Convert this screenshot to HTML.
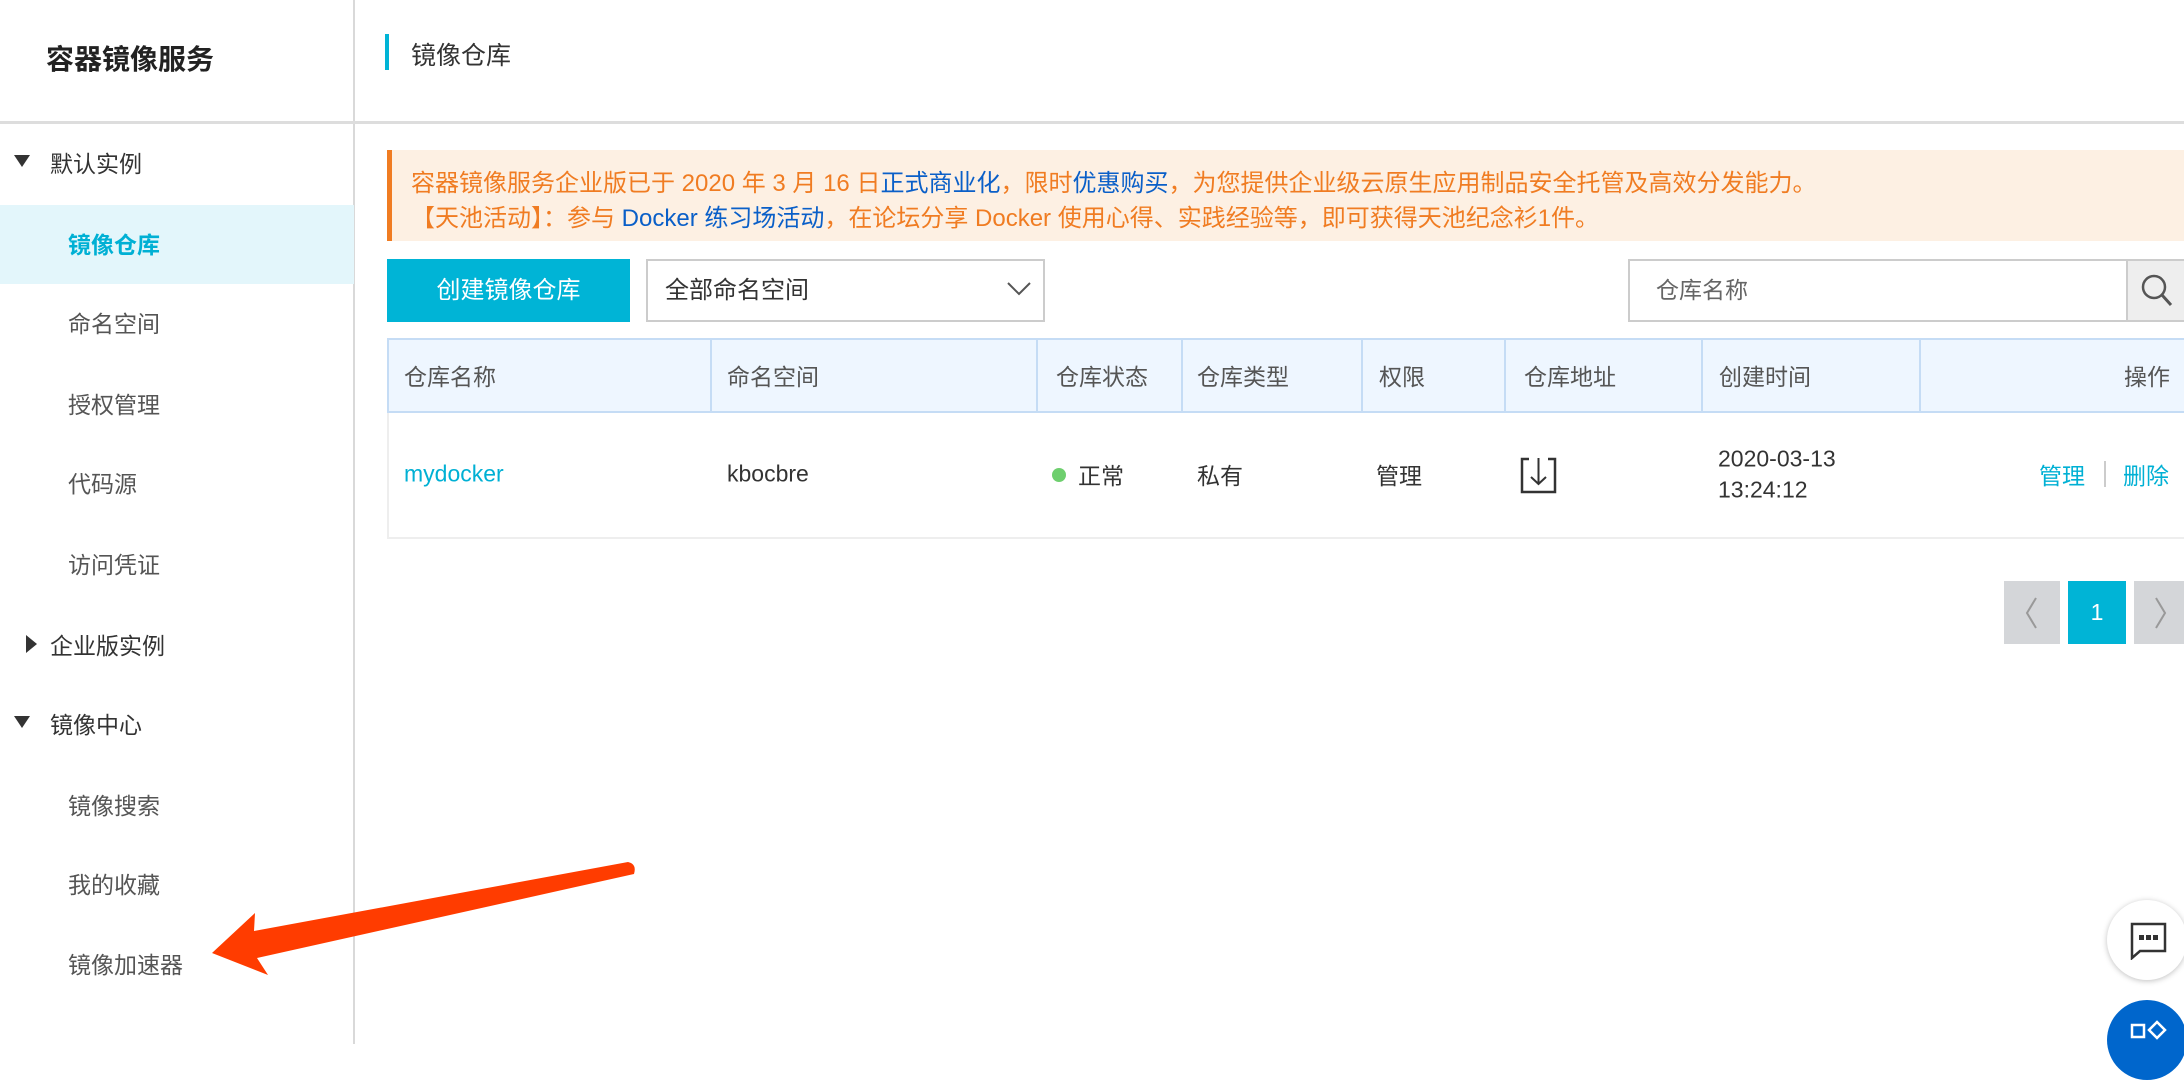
<!DOCTYPE html>
<html><head><meta charset="utf-8"><style>
*{margin:0;padding:0;box-sizing:border-box}
body{width:2184px;height:1044px;overflow:hidden;background:#fff;font-family:"Liberation Sans","Noto Sans CJK SC",sans-serif;color:#333;position:relative}
.a{position:absolute;white-space:nowrap}
.side{position:absolute;left:0;top:0;width:355px;height:1044px;border-right:2px solid #d9d9d9}
.nav{position:absolute;font-size:23px;color:#555;transform:translateY(-50%)}
.grp{color:#333}
.cell{position:absolute;transform:translateY(-50%);font-size:23px;white-space:nowrap}
</style></head><body>
<div class="side"></div>
<div class="a" style="left:0;top:121px;width:2184px;height:3px;background:#ddd"></div>
<div class="a" style="left:46px;top:38px;font-size:28px;font-weight:bold;color:#222">容器镜像服务</div>
<div class="a" style="left:385px;top:34px;width:4px;height:36px;background:#00b4d6"></div>
<div class="a" style="left:411px;top:36px;font-size:25px;color:#333">镜像仓库</div>

<div class="a" style="left:0;top:205px;width:354px;height:79px;background:#e3f6fb"></div>
<svg class="a" style="left:14px;top:155px" width="16" height="14"><path d="M0 0H16L8 12Z" fill="#333"/></svg>
<div class="nav grp" style="left:50px;top:162px">默认实例</div>
<div class="nav" style="left:68px;top:243px;color:#00b0d4;font-weight:bold">镜像仓库</div>
<div class="nav" style="left:68px;top:322px">命名空间</div>
<div class="nav" style="left:68px;top:403px">授权管理</div>
<div class="nav" style="left:68px;top:482px">代码源</div>
<div class="nav" style="left:68px;top:563px">访问凭证</div>
<svg class="a" style="left:26px;top:635px" width="12" height="18"><path d="M0 0L11 9L0 18Z" fill="#333"/></svg>
<div class="nav grp" style="left:50px;top:644px">企业版实例</div>
<svg class="a" style="left:14px;top:716px" width="16" height="14"><path d="M0 0H16L8 12Z" fill="#333"/></svg>
<div class="nav grp" style="left:50px;top:723px">镜像中心</div>
<div class="nav" style="left:68px;top:804px">镜像搜索</div>
<div class="nav" style="left:68px;top:883px">我的收藏</div>
<div class="nav" style="left:68px;top:963px">镜像加速器</div>

<div class="a" style="left:387px;top:150px;width:1797px;height:91px;background:#fdf0e3;border-left:5px solid #f07c22"></div>
<div class="a" style="left:411px;top:163px;font-size:24px;color:#f07c22">容器镜像服务企业版已于 2020 年 3 月 16 日<span style="color:#0a5fc8">正式商业化</span>，限时<span style="color:#0a5fc8">优惠购买</span>，为您提供企业级云原生应用制品安全托管及高效分发能力。</div>
<div class="a" style="left:411px;top:198px;font-size:24px;color:#f07c22">【天池活动】：参与 <span style="color:#0a5fc8">Docker 练习场活动</span>，在论坛分享 Docker 使用心得、实践经验等，即可获得天池纪念衫1件。</div>

<div class="a" style="left:387px;top:259px;width:243px;height:63px;background:#00b4d6;color:#fff;font-size:24px;line-height:63px;text-align:center">创建镜像仓库</div>
<div class="a" style="left:646px;top:259px;width:399px;height:63px;border:2px solid #ccc;font-size:24px;line-height:59px;padding-left:17px;color:#333">全部命名空间</div>
<svg class="a" style="left:1007px;top:282px" width="24" height="14"><path d="M1 1L12 12L23 1" stroke="#555" stroke-width="2" fill="none"/></svg>
<div class="a" style="left:1628px;top:259px;width:556px;height:63px;border:2px solid #ccc;font-size:23px;line-height:59px;padding-left:26px;color:#666">仓库名称</div>
<div class="a" style="left:2126px;top:261px;width:58px;height:59px;background:#eee;border-left:2px solid #ccc"></div>
<svg class="a" style="left:2140px;top:273px" width="34" height="36"><circle cx="14" cy="14" r="11" stroke="#555" stroke-width="2.5" fill="none"/><path d="M22 22L31 32" stroke="#555" stroke-width="3"/></svg>

<div class="a" style="left:387px;top:338px;width:1797px;height:75px;background:#eef6ff;border:2px solid #c5dcf5;border-right:none"></div>
<div class="a" style="left:710px;top:340px;width:2px;height:71px;background:#c5dcf5"></div>
<div class="a" style="left:1036px;top:340px;width:2px;height:71px;background:#c5dcf5"></div>
<div class="a" style="left:1181px;top:340px;width:2px;height:71px;background:#c5dcf5"></div>
<div class="a" style="left:1361px;top:340px;width:2px;height:71px;background:#c5dcf5"></div>
<div class="a" style="left:1504px;top:340px;width:2px;height:71px;background:#c5dcf5"></div>
<div class="a" style="left:1701px;top:340px;width:2px;height:71px;background:#c5dcf5"></div>
<div class="a" style="left:1919px;top:340px;width:2px;height:71px;background:#c5dcf5"></div>
<div class="cell" style="left:404px;top:375px;color:#555">仓库名称</div>
<div class="cell" style="left:727px;top:375px;color:#555">命名空间</div>
<div class="cell" style="left:1056px;top:375px;color:#555">仓库状态</div>
<div class="cell" style="left:1197px;top:375px;color:#555">仓库类型</div>
<div class="cell" style="left:1379px;top:375px;color:#555">权限</div>
<div class="cell" style="left:1524px;top:375px;color:#555">仓库地址</div>
<div class="cell" style="left:1719px;top:375px;color:#555">创建时间</div>
<div class="cell" style="right:14px;top:375px;color:#555">操作</div>

<div class="a" style="left:387px;top:413px;width:1797px;height:126px;border-left:2px solid #eee;border-bottom:2px solid #eee"></div>
<div class="cell" style="left:404px;top:474px;color:#00b0d4">mydocker</div>
<div class="cell" style="left:727px;top:474px">kbocbre</div>
<div class="a" style="left:1052px;top:468px;width:14px;height:14px;border-radius:50%;background:#6ecf6e"></div>
<div class="cell" style="left:1078px;top:474px">正常</div>
<div class="cell" style="left:1197px;top:474px">私有</div>
<div class="cell" style="left:1376px;top:474px">管理</div>
<svg class="a" style="left:1520px;top:456px" width="38" height="38"><path d="M9 3H2V36H35V3H28" stroke="#333" stroke-width="2.5" fill="none"/><path d="M18.5 2V28M11 21L18.5 28L26 21" stroke="#333" stroke-width="2" fill="none"/></svg>
<div class="cell" style="left:1718px;top:459px">2020-03-13</div>
<div class="cell" style="left:1718px;top:490px">13:24:12</div>
<div class="cell" style="left:2039px;top:474px;color:#00b0d4">管理</div>
<div class="a" style="left:2104px;top:461px;width:2px;height:26px;background:#ccc"></div>
<div class="cell" style="left:2123px;top:474px;color:#00b0d4">删除</div>

<div class="a" style="left:2004px;top:581px;width:56px;height:63px;background:#d4d6d9"></div>
<svg class="a" style="left:2022px;top:596px" width="20" height="34"><path d="M14 2L5 17L14 32" stroke="#999" stroke-width="2" fill="none"/></svg>
<div class="a" style="left:2068px;top:581px;width:58px;height:63px;background:#00b4d6;color:#fff;font-size:23px;line-height:63px;text-align:center">1</div>
<div class="a" style="left:2134px;top:581px;width:50px;height:63px;background:#d4d6d9"></div>
<svg class="a" style="left:2150px;top:596px" width="20" height="34"><path d="M6 2L15 17L6 32" stroke="#999" stroke-width="2" fill="none"/></svg>

<div class="a" style="left:2107px;top:900px;width:80px;height:80px;border-radius:50%;background:#fff;box-shadow:0 1px 6px rgba(0,0,0,.25)"></div>
<svg class="a" style="left:2130px;top:922px" width="38" height="38"><path d="M2 2H35V29H10L2 36Z" stroke="#333" stroke-width="2.5" fill="none"/><rect x="9" y="13" width="5" height="5" fill="#333"/><rect x="16" y="13" width="5" height="5" fill="#333"/><rect x="23" y="13" width="5" height="5" fill="#333"/></svg>
<div class="a" style="left:2107px;top:1000px;width:80px;height:80px;border-radius:50%;background:#0066cc"></div>
<svg class="a" style="left:2130px;top:1020px" width="40" height="24"><rect x="2" y="5" width="12" height="12" stroke="#fff" stroke-width="2.5" fill="none"/><path d="M27 2L35 10L27 18L19 10Z" stroke="#fff" stroke-width="2.5" fill="none"/></svg>

<svg class="a" style="left:0;top:0" width="2184" height="1044"><path d="M212 953L255 913L254 931L628 862Q637 864 634 874L257 958L268 975Z" fill="#ff3c00"/></svg>
</body></html>
